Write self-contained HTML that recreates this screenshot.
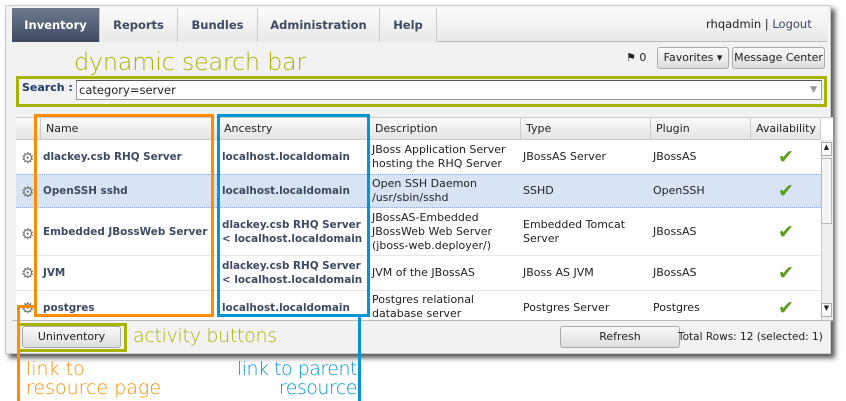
<!DOCTYPE html>
<html><head><style>
*{box-sizing:border-box;margin:0;padding:0}
body{width:846px;height:401px;background:#fff;position:relative;overflow:hidden;font-family:"DejaVu Sans","Liberation Sans",sans-serif;font-size:11px;color:#222}
.a{position:absolute}
.win{left:5px;top:5px;width:826px;height:349px;background:#f2f2f2;border:1px solid #ccc;box-shadow:4px 4px 5px #555}
.tab{top:8px;height:34px;line-height:34px;text-align:center;font-weight:bold;font-size:11.5px;color:#3c4a63;border-right:1px solid #ccc;background:linear-gradient(#fbfbfb,#e9e9e9)}
.btn{background:linear-gradient(#fafafa,#dedede);border:1px solid #aaa;border-radius:3px;text-align:center;color:#222}
.hd{top:118px;height:22px;line-height:22px;background:linear-gradient(#fafafa,#e4e4e4);border-right:1px solid #ccc;border-bottom:1px solid #ccc;padding-left:5px;color:#222}
.cell{position:absolute;display:flex;align-items:center;line-height:14px}
.b{font-weight:bold;color:#3c4a63;font-size:10.4px}
.chk{color:#5a9e1a;font-size:19px;font-weight:bold}
.gear{color:#777;font-size:15px}
.ann{font-family:"DejaVu Sans",sans-serif;font-weight:200}
</style></head><body>
<div class="a win"></div>
<div class="a" style="left:12px;top:8px;width:815px;height:34px;background:linear-gradient(#fbfbfb,#e9e9e9);border-bottom:1px solid #bbb"></div>
<div class="a tab" style="left:12px;width:88px;background:linear-gradient(#6e7b8f,#3d4a60);color:#fff">Inventory</div>
<div class="a tab" style="left:100px;width:78px">Reports</div>
<div class="a tab" style="left:178px;width:80px">Bundles</div>
<div class="a tab" style="left:258px;width:122px">Administration</div>
<div class="a tab" style="left:380px;width:57px">Help</div>
<div class="a" style="left:706px;top:17px;font-size:11.5px">rhqadmin | <span style="color:#3c4a63">Logout</span></div>
<div class="a" style="left:626px;top:51px;font-size:11px">⚑ 0</div>
<div class="a btn" style="left:657px;top:47px;width:72px;height:22px;line-height:20px">Favorites ▾</div>
<div class="a btn" style="left:732px;top:47px;width:93px;height:22px;line-height:20px">Message Center</div>
<div class="a ann" style="left:74px;top:48px;font-size:24px;color:#a8b400;letter-spacing:-0.3px">dynamic search bar</div>
<div class="a" style="left:16px;top:76px;width:811px;height:31px;border:3px solid #a8b400"></div>
<div class="a b" style="left:22px;top:81px;color:#1c3a6b;font-size:11px">Search :</div>
<div class="a" style="left:76px;top:80px;width:746px;height:20px;background:#fff;border:1px solid #999;border-top:1px solid #555;padding-left:2px;line-height:18px;font-size:11.5px">category=server<span style="position:absolute;right:4px;color:#999;font-size:9px">▼</span></div>
<div class="a" style="left:16px;top:117px;width:817px;height:203px;background:#fff;border-top:1px solid #ccc"></div>
<div class="a hd" style="left:16px;width:25px"></div>
<div class="a hd" style="left:41px;width:178px">Name</div>
<div class="a hd" style="left:219px;width:151px">Ancestry</div>
<div class="a hd" style="left:370px;width:151px">Description</div>
<div class="a hd" style="left:521px;width:130px">Type</div>
<div class="a hd" style="left:651px;width:100px">Plugin</div>
<div class="a hd" style="left:751px;width:70px">Availability</div>
<div class="a" style="left:821px;top:140px;width:12px;height:180px;background:#eee;border-left:1px solid #ccc"></div>
<div class="a" style="left:821px;top:142px;width:11px;height:14px;background:#fafafa;border:1px solid #aaa;font-size:7px;text-align:center">▲</div>
<div class="a" style="left:821px;top:303px;width:11px;height:14px;background:#fafafa;border:1px solid #aaa;font-size:7px;text-align:center">▼</div>
<div class="a" style="left:821px;top:158px;width:11px;height:66px;background:#f4f4f4;border:1px solid #bbb"></div>
<div class="a" style="left:16px;top:174px;width:805px;height:34px;background:#d8e3f4;border-top:1px dotted #8fa8d6;border-bottom:1px dotted #8fa8d6"></div>
<div class="a" style="left:16px;top:255px;width:805px;height:1px;background:#e6e6e6"></div>
<div class="a" style="left:16px;top:290px;width:805px;height:1px;background:#e6e6e6"></div>
<div class="cell gear" style="left:21px;top:148px;height:20px">⚙</div>
<div class="cell b" style="left:43px;top:140px;height:34px">dlackey.csb RHQ Server</div>
<div class="cell b" style="left:222px;top:140px;height:34px">localhost.localdomain</div>
<div class="cell" style="left:372px;top:140px;height:34px">JBoss Application Server<br>hosting the RHQ Server</div>
<div class="cell" style="left:523px;top:140px;height:34px">JBossAS Server</div>
<div class="cell" style="left:653px;top:140px;height:34px">JBossAS</div>
<div class="cell chk" style="left:778px;top:140px;height:34px">✔</div>
<div class="cell gear" style="left:21px;top:182px;height:20px">⚙</div>
<div class="cell b" style="left:43px;top:174px;height:34px">OpenSSH sshd</div>
<div class="cell b" style="left:222px;top:174px;height:34px">localhost.localdomain</div>
<div class="cell" style="left:372px;top:174px;height:34px">Open SSH Daemon<br>/usr/sbin/sshd</div>
<div class="cell" style="left:523px;top:174px;height:34px">SSHD</div>
<div class="cell" style="left:653px;top:174px;height:34px">OpenSSH</div>
<div class="cell chk" style="left:778px;top:174px;height:34px">✔</div>
<div class="cell gear" style="left:21px;top:224px;height:20px">⚙</div>
<div class="cell b" style="left:43px;top:208px;height:47px">Embedded JBossWeb Server</div>
<div class="cell b" style="left:222px;top:208px;height:47px">dlackey.csb RHQ Server<br>&lt; localhost.localdomain</div>
<div class="cell" style="left:372px;top:208px;height:47px">JBossAS-Embedded<br>JBossWeb Web Server<br>(jboss-web.deployer/)</div>
<div class="cell" style="left:523px;top:208px;height:47px">Embedded Tomcat<br>Server</div>
<div class="cell" style="left:653px;top:208px;height:47px">JBossAS</div>
<div class="cell chk" style="left:778px;top:208px;height:47px">✔</div>
<div class="cell gear" style="left:21px;top:263px;height:20px">⚙</div>
<div class="cell b" style="left:43px;top:255px;height:35px">JVM</div>
<div class="cell b" style="left:222px;top:255px;height:35px">dlackey.csb RHQ Server<br>&lt; localhost.localdomain</div>
<div class="cell" style="left:372px;top:255px;height:35px">JVM of the JBossAS</div>
<div class="cell" style="left:523px;top:255px;height:35px">JBoss AS JVM</div>
<div class="cell" style="left:653px;top:255px;height:35px">JBossAS</div>
<div class="cell chk" style="left:778px;top:255px;height:35px">✔</div>
<div class="cell gear" style="left:21px;top:298px;height:20px">⚙</div>
<div class="cell b" style="left:43px;top:298px;height:20px">postgres</div>
<div class="cell b" style="left:222px;top:298px;height:20px">localhost.localdomain</div>
<div class="cell" style="left:372px;top:293px;height:28px;overflow:hidden;align-items:flex-start">Postgres relational<br>database server</div>
<div class="cell" style="left:523px;top:298px;height:20px">Postgres Server</div>
<div class="cell" style="left:653px;top:298px;height:20px">Postgres</div>
<div class="cell chk" style="left:778px;top:298px;height:20px">✔</div>
<div class="a" style="left:12px;top:320px;width:821px;height:1px;background:#bbb"></div>
<div class="a btn" style="left:22px;top:326px;width:99px;height:22px;line-height:20px">Uninventory</div>
<div class="a" style="left:17px;top:323px;width:110px;height:29px;border:3px solid #a8b400"></div>
<div class="a ann" style="left:133px;top:325px;font-size:19px;color:#a8b400;letter-spacing:-0.3px">activity buttons</div>
<div class="a btn" style="left:560px;top:326px;width:120px;height:22px;line-height:20px">Refresh</div>
<div class="a" style="left:678px;top:331px;font-size:10.5px">Total Rows: 12 (selected: 1)</div>
<div class="a" style="left:34px;top:114px;width:180px;height:203px;border:3px solid #ff8c00"></div>
<div class="a" style="left:217px;top:114px;width:153px;height:203px;border:3px solid #0096d6"></div>
<div class="a" style="left:17px;top:305px;width:3px;height:96px;background:#ff8c00"></div>
<div class="a" style="left:17px;top:305px;width:17px;height:3px;background:#ff8c00"></div>
<div class="a" style="left:358px;top:316px;width:3px;height:85px;background:#0096d6"></div>
<div class="a ann" style="left:26px;top:360px;font-size:19px;line-height:19px;color:#ff8c00;letter-spacing:0px">link to<br>resource page</div>
<div class="a ann" style="left:190px;top:360px;width:167px;text-align:right;font-size:19px;line-height:19px;color:#0096d6;letter-spacing:-0.5px">link to parent<br>resource</div>
</body></html>
